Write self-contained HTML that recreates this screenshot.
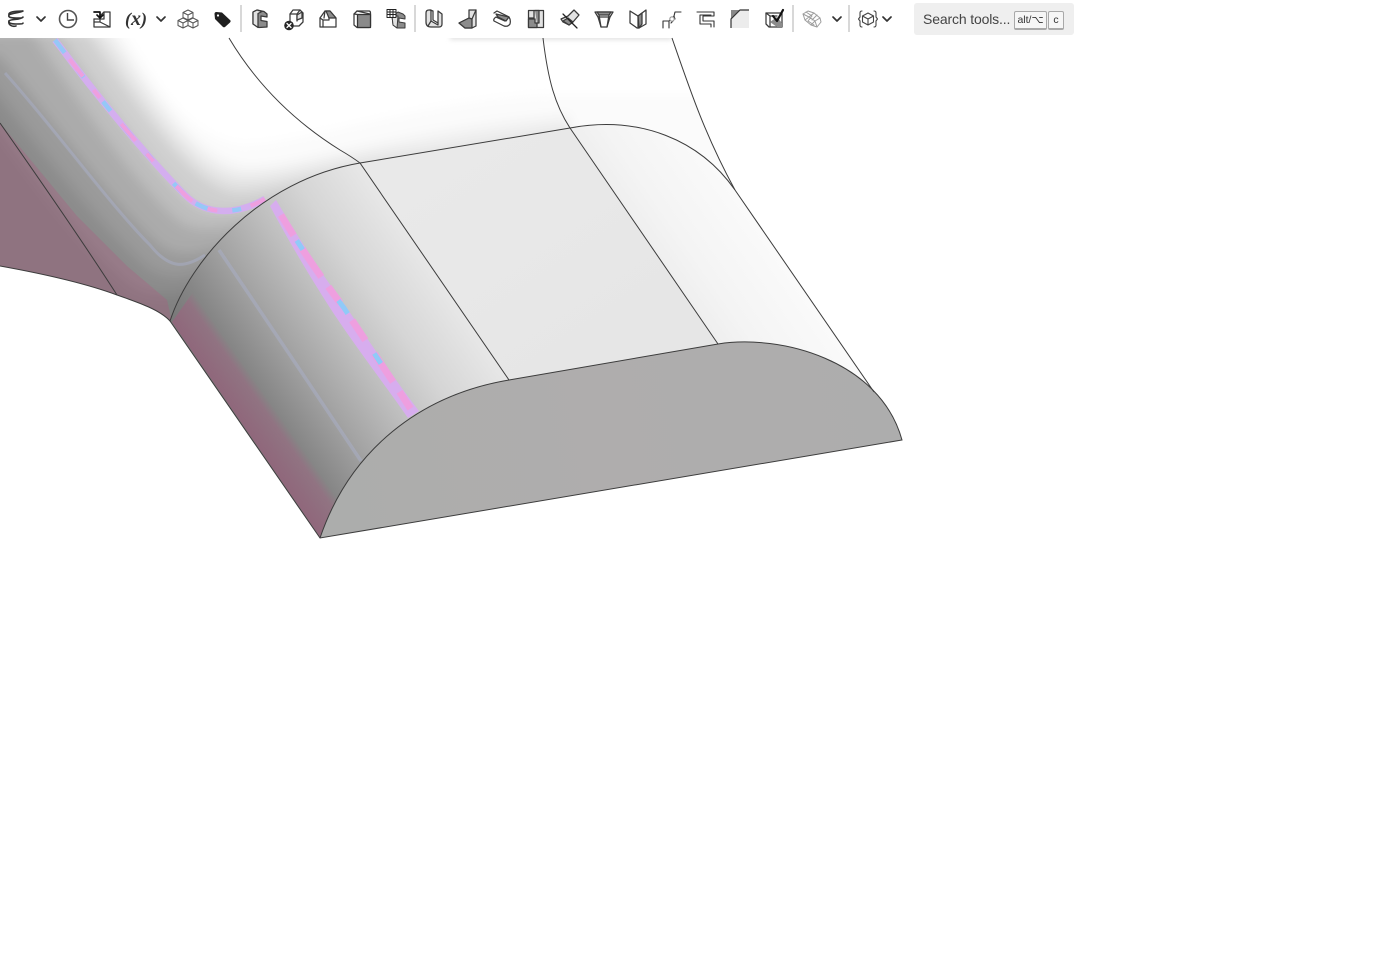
<!DOCTYPE html>
<html>
<head>
<meta charset="utf-8">
<style>
html,body{margin:0;padding:0;background:#fff;width:1376px;height:976px;overflow:hidden}
svg{position:absolute;left:0;top:0}
.i{fill:none;stroke:#3a3a3a;stroke-width:1.25;stroke-linejoin:round;stroke-linecap:round}
.g{fill:#8c8c8c}
.w{fill:#fff}
.l{fill:#e2e2e2}
.c{fill:none;stroke:#333;stroke-width:1.7;stroke-linecap:round;stroke-linejoin:round}
.s{stroke:#cfcfcf;stroke-width:1.6}
.e{fill:none;stroke:#3c3c3c;stroke-width:1}
#sb{position:absolute;left:914px;top:3px;width:160px;height:32px;background:#efefef;border-radius:3px;font-family:"Liberation Sans",sans-serif}
#sb span{position:absolute}
#lbl{left:9px;top:8px;font-size:14px;color:#444;white-space:nowrap;letter-spacing:-.15px}
.k{top:8px;height:16px;line-height:16px;border:1px solid #a9a9a9;border-bottom-width:2px;border-radius:2px;background:#f6f6f6;font-size:10.5px;color:#333;text-align:center}
</style>
</head>
<body>
<svg width="1376" height="976" viewBox="0 0 1376 976" xmlns="http://www.w3.org/2000/svg">
<defs>
<clipPath id="body"><path d="M0,38 L672,38 C690,90 705,135 735,190 C700,140 640,115 570,128 L360,163 C260,180 190,260 170,321 C160,310 140,303 117,295 C90,285 50,275 0,266 Z"/></clipPath>
<filter id="bl" x="-10%" y="-10%" width="120%" height="120%"><feGaussianBlur stdDeviation="6"/></filter>
<filter id="b2" x="-10%" y="-100%" width="120%" height="300%"><feGaussianBlur stdDeviation="2.5"/></filter>
<linearGradient id="fg" gradientUnits="userSpaceOnUse" x1="320" y1="538" x2="521" y2="399">
<stop offset="0" stop-color="#777"/><stop offset=".15" stop-color="#868686"/><stop offset=".35" stop-color="#a4a4a4"/><stop offset=".55" stop-color="#bebebe"/><stop offset=".75" stop-color="#d5d5d5"/><stop offset="1" stop-color="#e7e7e7"/>
</linearGradient>
<linearGradient id="rg" gradientUnits="userSpaceOnUse" x1="570" y1="128" x2="652" y2="71">
<stop offset="0" stop-color="#efefef"/><stop offset=".3" stop-color="#f4f4f4"/><stop offset="1" stop-color="#fafafa"/>
</linearGradient>
<linearGradient id="mg" gradientUnits="userSpaceOnUse" x1="465" y1="145" x2="610" y2="360">
<stop offset="0" stop-color="#e9e9e9"/><stop offset="1" stop-color="#e6e6e6"/>
</linearGradient>
<linearGradient id="ef" gradientUnits="userSpaceOnUse" x1="320" y1="538" x2="900" y2="440">
<stop offset="0" stop-color="#acadac"/><stop offset=".5" stop-color="#afadad"/><stop offset="1" stop-color="#adadad"/>
</linearGradient>
<linearGradient id="pf" gradientUnits="userSpaceOnUse" x1="245" y1="430" x2="275" y2="409">
<stop offset="0" stop-color="#bb4a82" stop-opacity=".36"/><stop offset=".75" stop-color="#bb4a82" stop-opacity=".26"/><stop offset="1" stop-color="#bb4a82" stop-opacity="0"/>
</linearGradient>
</defs>

<!-- back swept body -->
<g clip-path="url(#body)">
<rect x="0" y="38" width="760" height="300" fill="#fff"/>
<rect x="450" y="30" width="222" height="10" fill="#e4e4e4" filter="url(#b2)"/>
<g filter="url(#bl)">
<path fill="#fbfbfb" d="M122,30 C165,100 190,135 240,145 C300,145 400,105 540,95 L760,95 L760,500 L-50,500 L-50,30Z"/>
<path fill="#f1f1f1" d="M112,30 C155,95 195,160 245,168 C300,168 390,132 570,115 L570,500 L-50,500 L-50,30Z"/>
<path fill="#e2e2e2" d="M100,30 C150,100 190,170 238,178 C285,180 330,158 420,150 L570,128 L570,500 L-50,500 L-50,30Z"/>
<path fill="#cfcfcf" d="M85,30 C135,100 185,180 232,192 C265,195 300,178 360,175 L360,500 L-50,500 L-50,30Z"/>
<path fill="#bdbdbd" d="M58,30 C105,100 160,180 195,205 C220,220 250,210 320,190 L320,500 L-50,500 L-50,30Z"/>
<path fill="#ababab" d="M30,30 C85,110 135,185 180,222 C205,238 240,225 300,210 L300,500 L-50,500 L-50,30Z"/>
<path fill="#9a9a9a" d="M0,55 C60,130 115,205 160,245 C185,262 215,250 260,230 L260,500 L-50,500 L-50,55Z"/>
<path fill="#8c8c8c" d="M-30,55 C40,150 100,225 145,265 C170,285 200,275 240,250 L240,500 L-50,500Z"/>
<path fill="#818181" d="M-50,60 C20,160 85,250 130,285 C150,300 190,300 230,270 L230,500 L-50,500Z"/>
</g>
<path d="M0,123 L77,216 L127,266 L167,300 L172,322 L117,296 L0,267Z" fill="#b84c80" fill-opacity=".26"/>
<path d="M55,40 C100,100 150,160 185,195 C205,215 235,216 265,199" fill="none" stroke="#d4aeef" stroke-width="6.5"/>
<path d="M55,40 C100,100 150,160 185,195 C205,215 235,216 265,199" fill="none" stroke="#95c8f7" stroke-width="4.5" stroke-dasharray="16 22 9 31 12 18"/>
<path d="M55,40 C100,100 150,160 185,195 C205,215 235,216 265,199" fill="none" stroke="#ee9fdf" stroke-width="4" stroke-dasharray="10 34 22 17" stroke-dashoffset="20"/>
<path d="M5,73 C60,135 110,205 150,245 C170,270 185,268 205,255" fill="none" stroke="#adb6d8" stroke-width="3" stroke-opacity=".38"/>
</g>

<!-- front rounded section -->
<path d="M320,538 L170,321 C190,260 260,180 360,163 L509,380 C420,395 350,450 320,538Z" fill="url(#fg)"/>
<path d="M172,322 L196,288 L340,495 L320,537Z" fill="url(#pf)"/>
<path d="M219,250 C260,310 320,400 361,461" fill="none" stroke="#adb6d8" stroke-width="3.5" stroke-opacity=".38"/>
<path d="M276,200 C300,240 322,275 345,305 C368,340 395,380 419,411 L408,418 C385,385 358,350 334,314 C313,282 288,240 270,206Z" fill="#d7adee"/>
<path d="M281,215 C299,245 319,275 344,308 C367,343 389,375 412,411" fill="none" stroke="#ee9fdf" stroke-width="7" stroke-dasharray="24 16 34 12 20 21"/>
<path d="M281,215 C299,245 319,275 344,308 C367,343 389,375 412,411" fill="none" stroke="#90caf8" stroke-width="5" stroke-dasharray="11 62 16 48 12 90" stroke-dashoffset="-30"/>

<!-- middle flat -->
<path d="M360,163 L570,128 L718,344 L509,380Z" fill="url(#mg)"/>
<!-- right rounded -->
<path d="M570,128 C640,115 700,140 735,190 L874,392 C850,360 780,334 718,344Z" fill="url(#rg)"/>
<!-- end face -->
<path d="M320,538 C350,450 420,395 509,380 L718,344 C780,334 880,360 902,440Z" fill="url(#ef)"/>

<!-- edges -->
<path class="e" d="M320,538 C350,450 420,395 509,380 L718,344 C780,334 880,360 902,440 L320,538 L170,321"/>
<path class="e" d="M0,266 C50,275 90,285 117,295 C140,303 160,310 170,321 C190,260 260,180 360,163 L570,128 C640,115 700,140 735,190"/>
<path class="e" d="M229,38 C260,90 300,125 340,150 Q352,157 360,163 L509,380"/>
<path class="e" d="M543,38 C548,80 555,105 570,128 L718,344"/>
<path class="e" d="M672,38 C690,90 705,135 735,190 L874,392"/>
<path class="e" d="M0,123 C40,180 85,245 117,295"/>

<!-- toolbar -->
<rect x="0" y="0" width="1376" height="37" fill="#fff"/>

<!-- helix -->
<g class="i" style="stroke:#333;stroke-width:1.6">
<path d="M9,15 C8,12 14,11 23,11 C19,13 11,13 9,15 C8,17 10,18 16,18 C20,18 23,18 23,17 C21,20 10,19 9,21 C8,23 11,24 16,24 C20,24 23,24 23,23"/>
<path d="M9,21 C8,25 12,27 16,26"/>
</g>
<path class="c" d="M37,17 L41,21 L45,17"/>
<!-- clock -->
<circle cx="68" cy="19" r="8.5" fill="#fff" stroke="#555" stroke-width="1.6"/>
<path d="M67.5,13 V20 H74" fill="none" stroke="#444" stroke-width="1.4"/>
<!-- import -->
<g class="i">
<path d="M94,19 V27 H110 V12 H104 L101,15" class="w"/>
<path d="M94,22 H100 V19 M100,22 L110,27 M104,12 V19 H100 L94,19"/>
<path d="M94,12 H100 V17 M97,15 L100,18 L103,15" style="stroke:#111;stroke-width:1.7"/>
</g>
<!-- (x) -->
<text x="125" y="25" font-family="'Liberation Serif',serif" font-weight="700" font-style="italic" font-size="18" fill="#333">(<tspan font-size="20">x</tspan>)</text>
<path class="c" d="M157,17 L161,21 L165,17"/>
<!-- cubes -->
<g class="i" style="stroke:#555;stroke-width:1">
<path d="M188,10 L193,12.5 V17.5 L188,20 L183,17.5 V12.5Z M183,12.5 L188,15 L193,12.5 M188,15 V20"/>
<path d="M183,18 L188,20.5 V25.5 L183,28 L178,25.5 V20.5Z M178,20.5 L183,23 L188,20.5 M183,23 V28"/>
<path d="M193,18 L198,20.5 V25.5 L193,28 L188,25.5 V20.5Z M188,20.5 L193,23 L198,20.5 M193,23 V28"/>
</g>
<!-- tag -->
<path d="M214.5,14 Q214.5,12 216.5,12 L222,12.5 L230.5,20.5 Q231,21.5 230,22.5 L225,27 Q224,27.5 223,27 L215,19Z" fill="#1f1f1f"/>
<circle cx="218" cy="15.5" r="1.1" fill="#fff"/>
<line class="s" x1="241" y1="5" x2="241" y2="32"/>

<!-- g1 extrude -->
<g transform="translate(260,19)" class="i">
<path class="g" d="M-7,-7 L-3,-9 L4,-7.5 L7,-5 V-2 L1,-3 V1.5 L7,2.5 V8 L-1,8.5 L-7,5Z"/>
<path class="l" d="M-7,-7 L-3,-9 L2,-7.5 L-2,-5.5 V8.5 L-7,5Z"/>
</g>
<!-- g2 delete -->
<g transform="translate(294,19)" class="i">
<path class="w" d="M-4,-5 L-1,-9 H6 L9,-6 V3 L5,7 H-2 L-4,3Z"/>
<path d="M-4,-5 H3 L6,-9 M3,-5 V2 M3,-2 L9,-6"/>
<path class="l" d="M3,-4 L8,-7 V-1 L3,1Z"/>
<circle cx="-5" cy="6.5" r="4.8" fill="#262626" stroke="none"/>
<path d="M-7,4.5 L-3,8.5 M-3,4.5 L-7,8.5" style="stroke:#fff;stroke-width:1.3"/>
</g>
<!-- g3 -->
<g transform="translate(328,19)" class="i">
<path class="w" d="M-8,8 V-1 L-3,-8 H2 L8,-1 V8Z"/>
<path class="g" d="M-2,-8 H2 L8,-1 H1Z"/>
<path d="M-8,-1 L-5,1 V8 M-5,1 H1 V-1 M-3,-8 L-4,-1"/>
</g>
<!-- g4 box -->
<g transform="translate(362,19)" class="i">
<path class="w" d="M-8,-5 L-5,-8 H7 Q8.5,-8 8.5,-6 V7 Q8.5,8.5 7,8.5 H-5 L-8,6Z"/>
<rect x="-4.5" y="-4.5" width="13" height="13" fill="#8a8a8a" stroke="#333"/>
<path d="M-8,-5 L-4.5,-4.5 M-5,-8 L8,-5"/>
</g>
<!-- g5 grid -->
<g transform="translate(396,19)" class="i" style="stroke-width:1">
<path class="g" d="M-4,-3 L2,-7 L7,-5 L9,-3 V0 L3,-1 V3 L9,4 V9 L1,9 L-3,6Z"/>
<path class="l" d="M-4,-3 H2 L1,9 L-3,6Z"/>
<rect x="-9" y="-9.5" width="9" height="8" class="w" style="stroke:#222"/>
<path d="M-6,-9.5 V-1.5 M-3,-9.5 V-1.5 M-9,-7 H0 M-9,-4.5 H0" style="stroke:#222"/>
</g>
<line class="s" x1="415" y1="5" x2="415" y2="32"/>

<!-- sheet metal -->
<g transform="translate(434,19)" class="i">
<path class="l" d="M-8,-6 Q-8,-9 -5,-9 H-3 V2 L4,6 V-8 L8,-5 V5 Q8,8 5,8 H-3 Q-8,8 -8,3Z"/>
<path d="M-4,-9 L-1,-8 V1 L4,4 M-3,2 L-6,7"/>
</g>
<g transform="translate(468,19)" class="i">
<path class="l" d="M-9,4 L1,-1 V-9 L8,-9 V7 L4,9 H-3Z"/>
<path class="g" d="M1,-1 L4,0 V9 L-3,9 L-9,4Z"/>
<path d="M4,0 L8,-9"/>
</g>
<g transform="translate(502,19)" class="i">
<path class="w" d="M-8,-6 L-5,-8 L7,-2 Q9,1 8,5 Q6,8 2,7 L-8,2 Q-9,0 -6,-2 L3,2"/>
<path class="g" d="M-6,-5 L7,-2 L4,2 L-4,-2Z"/>
</g>
<g transform="translate(536,19)" class="i">
<rect x="-7.5" y="-8.5" width="15" height="17" class="l"/>
<path class="g" d="M-1,-8.5 H3 V4 H-1 V0 H-7.5 V8.5 H1 V4"/>
<path d="M-7.5,-1 H-2 V-8.5"/>
</g>
<g transform="translate(570,19)" class="i">
<path class="l" d="M-9,0 L-2,-3 L4,-9 L9,-4 L3,3 L-1,6 L-7,3Z"/>
<path class="g" d="M-7,2 L-2,-1 L3,3 L-1,6Z"/>
<path d="M-7,-5 L7,9" style="stroke:#222"/>
</g>
<g transform="translate(604,19)" class="i">
<path class="w" d="M-9,-7 H9 L6,-2 L3,8 H-3 L-6,-2Z"/>
<path class="g" d="M-7,-7 H7 L5,-4 H-5Z"/>
<path d="M-6,-2 H6 M-3,8 L-5,-4 M3,8 L5,-4"/>
</g>
<g transform="translate(638,19)" class="i">
<path class="w" d="M-8,-8 L0,-3 L8,-9 V5 L1,9 L-1,9 L-8,4Z"/>
<path class="g" d="M0,-3 L4,-6 V5 L1,9Z"/>
<path d="M0,-3 V9"/>
</g>
<g transform="translate(672,19)" class="i" style="stroke:#333;stroke-width:1.1">
<path d="M-9,9 V2 H-3 L2,-3 L3,-7 H9 M-3,9 V2 M3,0 L2,-3 M-1,4 L1,2"/>
<circle cx="0" cy="0" r="2.2" class="w" style="stroke:#999"/>
</g>
<g transform="translate(706,19)" class="i" style="stroke:#333;stroke-width:1.1">
<path d="M-9,-7 H8 V-3 H-3 V2 H8 V8 M5,8 V5 H-6 V-4 H5"/>
</g>
<g transform="translate(740,19)">
<rect x="-9" y="-9" width="18" height="18" fill="#ececec"/>
<path d="M-9,-9 H0 L-9,0Z" fill="#888"/>
<path d="M9,-9 H0 L-9,0 V9" fill="none" stroke="#333" stroke-width="1.2"/>
</g>
<g transform="translate(774,19)" class="i">
<path class="w" d="M-8,-6 H8 V8 H-5 L-8,5Z"/>
<path d="M-8,-6 L-4,-3 V8 M-4,-3 L3,-3"/>
<path class="g" d="M-4,3 L3,-2 L8,4 V8 H3Z" style="stroke:none"/>
<path d="M-1,-3 L3,2 L9,-9" style="stroke:#111;stroke-width:2.2"/>
</g>
<line class="s" x1="793" y1="5" x2="793" y2="32"/>

<!-- faded mesh -->
<g transform="translate(812,19)" class="i" style="stroke:#9d9d9d;stroke-width:1">
<path d="M-9,-5 L-4,-8 L2,-6 L8,-1 L9,3 L5,8 L-1,6 L-7,1Z"/>
<path d="M-9,-5 L-3,-2 L2,-6 M-3,-2 L3,2 L8,-1 M3,2 L5,8 M-7,1 L-3,-2 M-1,6 L3,2 M-6,-7 L0,-3 L-4,2 L2,6 M5,-4 L0,1"/>
</g>
<path class="c" d="M833,17 L837,21 L841,17"/>
<line class="s" x1="849" y1="5" x2="849" y2="32"/>
<g transform="translate(868,19)" class="i" style="stroke:#444;stroke-width:1.1">
<path d="M0,-6 L5.5,-3 V3 L0,6 L-5.5,3 V-3Z M-5.5,-3 L0,0 L5.5,-3 M0,0 V6"/>
<path d="M-6,-8 Q-8,-8 -8,-6 V-2 L-9.5,0 L-8,2 V6 Q-8,8 -6,8 M6,-8 Q8,-8 8,-6 V-2 L9.5,0 L8,2 V6 Q8,8 6,8"/>
</g>
<path class="c" d="M883,17 L887,21 L891,17"/>
</svg>

<div id="sb">
<span id="lbl">Search tools...</span>
<span class="k" style="left:100px;width:31px">alt/⌥</span>
<span class="k" style="left:134px;width:14px">c</span>
</div>
</body>
</html>
